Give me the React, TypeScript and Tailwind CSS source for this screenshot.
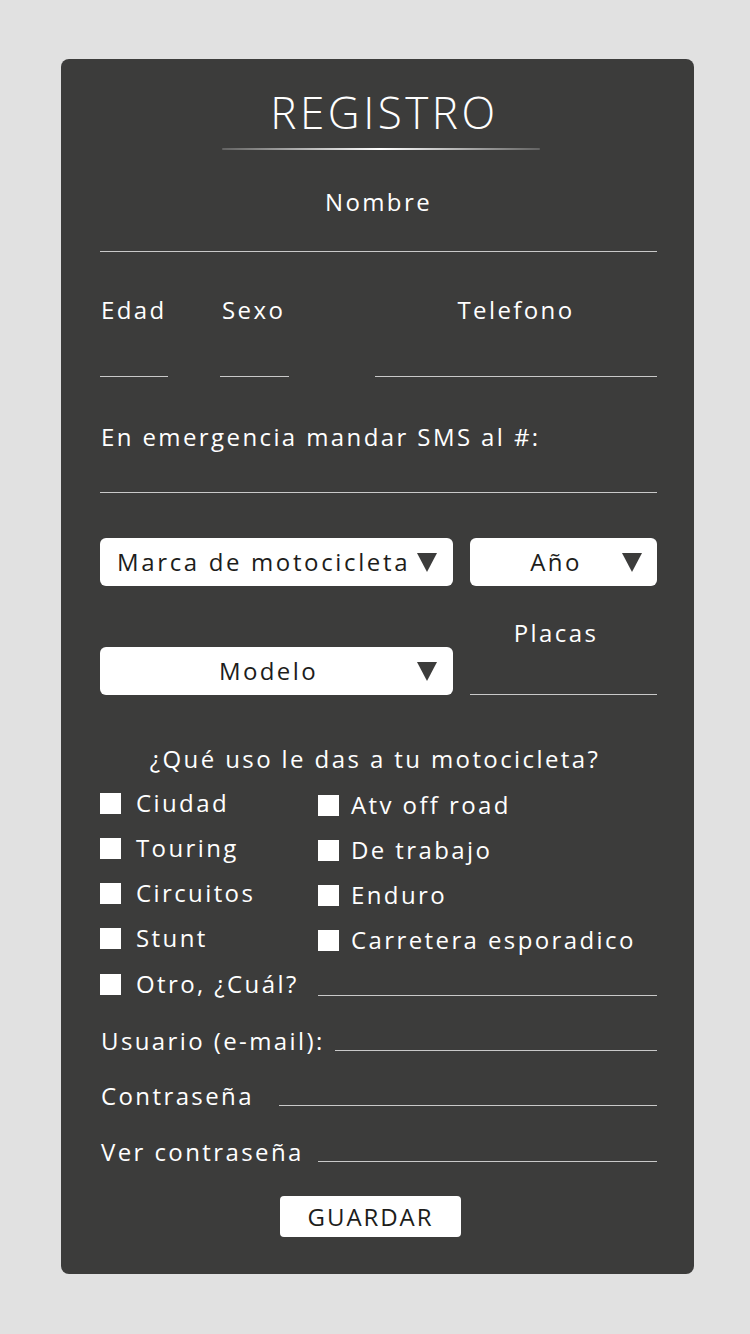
import React from "react";

const font = { fontFamily: "'Open Sans', Lato, sans-serif" };

const Arrow = () => (
  <svg width="20" height="19" viewBox="0 0 20 19" className="shrink-0">
    <polygon points="0,0 20,0 10,19" fill="#3c3c3b" />
  </svg>
);

const Check = ({ label, col2 }: { label: string; col2?: boolean }) => (
  <div className="flex items-center h-[22px]">
    <div className={`w-[21px] h-[21px] bg-white shrink-0 ${col2 ? "mr-[12px]" : "mr-[15px]"}`} />
    <span className="text-[24px] leading-none tracking-[0.1em] text-white">{label}</span>
  </div>
);

const Line = ({ className = "" }: { className?: string }) => (
  <div className={`border-b border-[#c9c9c9] ${className}`} />
);

const App: React.FC = () => {
  return (
    <div className="w-[750px] min-h-[1334px] bg-[#e1e1e1] pt-[59px]" style={font}>
      <div className="mx-[61px] w-[633px] h-[1215px] bg-[#3c3c3b] rounded-[8px] pl-[39px] pr-[37px] pt-[31px] text-white">
        <h1 className="pl-[12px] text-center text-[44px] leading-none tracking-[0.08em] font-light">REGISTRO</h1>
        <div className="ml-[122px] mt-[14px] w-[318px] h-[2px] rounded-full bg-linear-to-r from-white/20 via-white to-white/20" />

        <div className="mt-[40px] text-center text-[24px] leading-none tracking-[0.1em]">Nombre</div>
        <Line className="mt-[37px]" />

        <div className="mt-[46px] flex">
          <div className="w-[68px]">
            <div className="pl-[1px] text-[24px] leading-none tracking-[0.1em]">Edad</div>
            <Line className="mt-[54px]" />
          </div>
          <div className="ml-[52px] w-[69px]">
            <div className="pl-[2px] text-[24px] leading-none tracking-[0.1em]">Sexo</div>
            <Line className="mt-[54px]" />
          </div>
          <div className="ml-[86px] flex-1">
            <div className="text-center text-[24px] leading-none tracking-[0.1em]">Telefono</div>
            <Line className="mt-[54px]" />
          </div>
        </div>

        <div className="mt-[48px] pl-[1px] text-[24px] leading-none tracking-[0.1em]">En emergencia mandar SMS al #:</div>
        <Line className="mt-[43px]" />

        <div className="mt-[45px] flex gap-[17px] text-[#1d1d1b]">
          <div className="w-[353px] h-[48px] bg-white rounded-[6px] flex items-center pl-[17px] pr-[16px] justify-between">
            <span className="text-[24px] leading-none tracking-[0.11em] whitespace-nowrap">Marca de motocicleta</span>
            <Arrow />
          </div>
          <div className="flex-1 h-[48px] bg-white rounded-[6px] flex items-center pr-[15px]">
            <span className="flex-1 text-center pl-[20px] text-[24px] leading-none tracking-[0.1em]">Año</span>
            <Arrow />
          </div>
        </div>

        <div className="mt-[35px] flex gap-[17px] items-end">
          <div className="w-[353px] h-[48px] bg-white rounded-[6px] flex items-center pr-[16px] text-[#1d1d1b]">
            <span className="flex-1 text-center pl-[20px] text-[24px] leading-none tracking-[0.1em]">Modelo</span>
            <Arrow />
          </div>
          <div className="flex-1">
            <div className="pr-[15px] text-center text-[24px] leading-none tracking-[0.1em]">Placas</div>
            <Line className="mt-[49px]" />
          </div>
        </div>

        <div className="mt-[52px] text-center pr-[7px] text-[24px] leading-none tracking-[0.1em]">¿Qué uso le das a tu motocicleta?</div>

        <div className="mt-[21px] flex">
          <div className="w-[218px] flex flex-col gap-[23px]">
            <Check label="Ciudad" />
            <Check label="Touring" />
            <Check label="Circuitos" />
            <Check label="Stunt" />
          </div>
          <div className="flex-1 flex flex-col gap-[23px] pt-[2px]">
            <Check label="Atv off road" col2 />
            <Check label="De trabajo" col2 />
            <Check label="Enduro" col2 />
            <Check label="Carretera esporadico" col2 />
          </div>
        </div>

        <div className="mt-[22px] flex items-end">
          <div className="w-[218px]">
            <Check label="Otro, ¿Cuál?" />
          </div>
          <Line className="flex-1 mb-[-1px]" />
        </div>

        <div className="mt-[34px] flex items-end">
          <span className="pl-[1px] text-[24px] leading-none tracking-[0.1em] mr-[10px] whitespace-nowrap">Usuario (e-mail):</span>
          <Line className="flex-1 mb-[2px]" />
        </div>
        <div className="mt-[31px] flex items-end">
          <span className="pl-[1px] text-[24px] leading-none tracking-[0.1em] w-[179px]">Contraseña</span>
          <Line className="flex-1 mb-[2px]" />
        </div>
        <div className="mt-[32px] flex items-end">
          <span className="pl-[1px] text-[24px] leading-none tracking-[0.1em] w-[218px] whitespace-nowrap">Ver contraseña</span>
          <Line className="flex-1 mb-[2px]" />
        </div>

        <div className="mt-[32px] flex justify-center pr-[16px]">
          <button className="w-[181px] h-[41px] bg-white rounded-[4px] text-[#1d1d1b] text-[24px] leading-none tracking-[0.08em]">
            GUARDAR
          </button>
        </div>
      </div>
    </div>
  );
};

export default App;
